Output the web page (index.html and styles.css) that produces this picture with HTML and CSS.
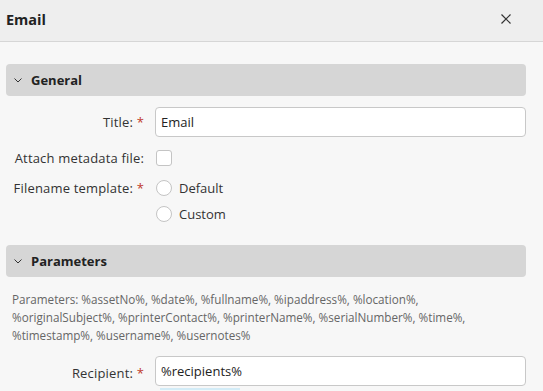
FILE: index.html
```html
<!DOCTYPE html>
<html>
<head>
<meta charset="utf-8">
<link rel="stylesheet" href="styles.css">
</head>
<body>
<div class="dialog">
  <header class="dlg-head">
    <h1 class="dlg-title">Email</h1>
    <button class="close" aria-label="Close">
      <svg width="10" height="10" viewBox="0 0 10 10"><path d="M0.5 0.5L9.5 9.5M9.5 0.5L0.5 9.5" stroke="#333" stroke-width="1.2" fill="none"/></svg>
    </button>
  </header>
  <div class="dlg-body">
    <section class="section">
      <div class="sec-head">
        <svg class="chev" width="8" height="5" viewBox="0 0 8 5"><path d="M0.5 0.5L4 4L7.5 0.5" stroke="#333" stroke-width="1" fill="none"/></svg>
        <span>General</span>
      </div>
      <div class="form">
        <div class="row row-input">
          <label class="lbl">Title: <span class="req">*</span></label>
          <div class="input">Email</div>
        </div>
        <div class="row row-check">
          <label class="lbl">Attach metadata file:</label>
          <span class="checkbox"></span>
        </div>
        <div class="row row-radio">
          <label class="lbl">Filename template: <span class="req">*</span></label>
          <div class="radios">
            <div class="radio-item"><span class="radio"></span>Default</div>
            <div class="radio-item"><span class="radio"></span>Custom</div>
          </div>
        </div>
      </div>
    </section>
    <section class="section">
      <div class="sec-head">
        <svg class="chev" width="8" height="5" viewBox="0 0 8 5"><path d="M0.5 0.5L4 4L7.5 0.5" stroke="#333" stroke-width="1" fill="none"/></svg>
        <span>Parameters</span>
      </div>
      <p class="hint">Parameters: %assetNo%, %date%, %fullname%, %ipaddress%, %location%, %originalSubject%, %printerContact%, %printerName%, %serialNumber%, %time%, %timestamp%, %username%, %usernotes%</p>
      <div class="form">
        <div class="row row-input">
          <label class="lbl">Recipient: <span class="req">*</span></label>
          <div class="input-wrap">
            <div class="input">%recipients%</div>
            <div class="focus-line"></div>
          </div>
        </div>
      </div>
    </section>
  </div>
</div>
</body>
</html>
```

FILE: styles.css
```css
* { box-sizing: border-box; }
html, body { margin: 0; padding: 0; }
body {
  font-family: "Open Sans", "Noto Sans", sans-serif;
  font-size: 13px;
  color: #333;
  background: #f7f7f7;
  width: 543px;
  height: 391px;
  overflow: hidden;
}
.dialog { display: flex; flex-direction: column; }
.dlg-head {
  height: 42px;
  background: #eeeeee;
  border-bottom: 1px solid #d6d6d6;
  display: flex;
  align-items: center;
  justify-content: space-between;
  padding: 0 32px 0 6px;
}
.dlg-title {
  margin: 0;
  font-size: 14.5px;
  font-weight: 700;
  color: #222;
  position: relative;
  top: -1px;
}
.close {
  border: 0;
  background: none;
  padding: 0;
  width: 10px;
  height: 10px;
  display: flex;
  position: relative;
  top: -2px;
}
.dlg-body { padding: 22px 17px 0 6px; }
.sec-head {
  height: 32px;
  background: #d6d6d6;
  border-radius: 4px;
  display: flex;
  align-items: center;
  padding-left: 8px;
  font-weight: 700;
  font-size: 13px;
  color: #222;
}
.chev { margin-right: 9px; margin-top: 1px; }
.form { display: flex; flex-direction: column; }
.row { display: flex; align-items: flex-start; }
.lbl {
  width: 138px;
  text-align: right;
  flex-shrink: 0;
  margin-right: 11px;
  white-space: nowrap;
  letter-spacing: 0.18px;
}
.req { color: #c0392b; }
.row-input { margin-top: 11px; align-items: center; }
.input-wrap { flex: 1; position: relative; }
.input {
  flex: 1;
  height: 30px;
  background: #fff;
  border: 1px solid #c8c8c8;
  border-radius: 4px;
  padding: 0 5px;
  display: flex;
  align-items: center;
  color: #222;
}
.focus-line {
  width: 80px;
  height: 2px;
  background: #d3ecf7;
  margin: 2px 0 0 5px;
}
.row-check { margin-top: 13px; align-items: center; height: 16px; }
.checkbox {
  width: 16px; height: 16px;
  background: #fff;
  border: 1px solid #c4c4c4;
  border-radius: 3px;
  margin-left: 1px;
}
.row-radio { margin-top: 14px; }
.row-radio .lbl { line-height: 16px; }
.radios { display: flex; flex-direction: column; gap: 10px; }
.radio-item { display: flex; align-items: center; line-height: 16px; }
.radio {
  width: 16px; height: 16px;
  border-radius: 50%;
  background: #fff;
  border: 1px solid #c4c4c4;
  margin-left: 1px;
  margin-right: 7px;
}
.section + .section { margin-top: 23px; }
.hint {
  margin: 13px 0 0 6px;
  max-width: 474px;
  font-size: 11.7px;
  line-height: 18px;
  color: #666;
}
.section + .section .row-input { margin-top: 12px; }
```
